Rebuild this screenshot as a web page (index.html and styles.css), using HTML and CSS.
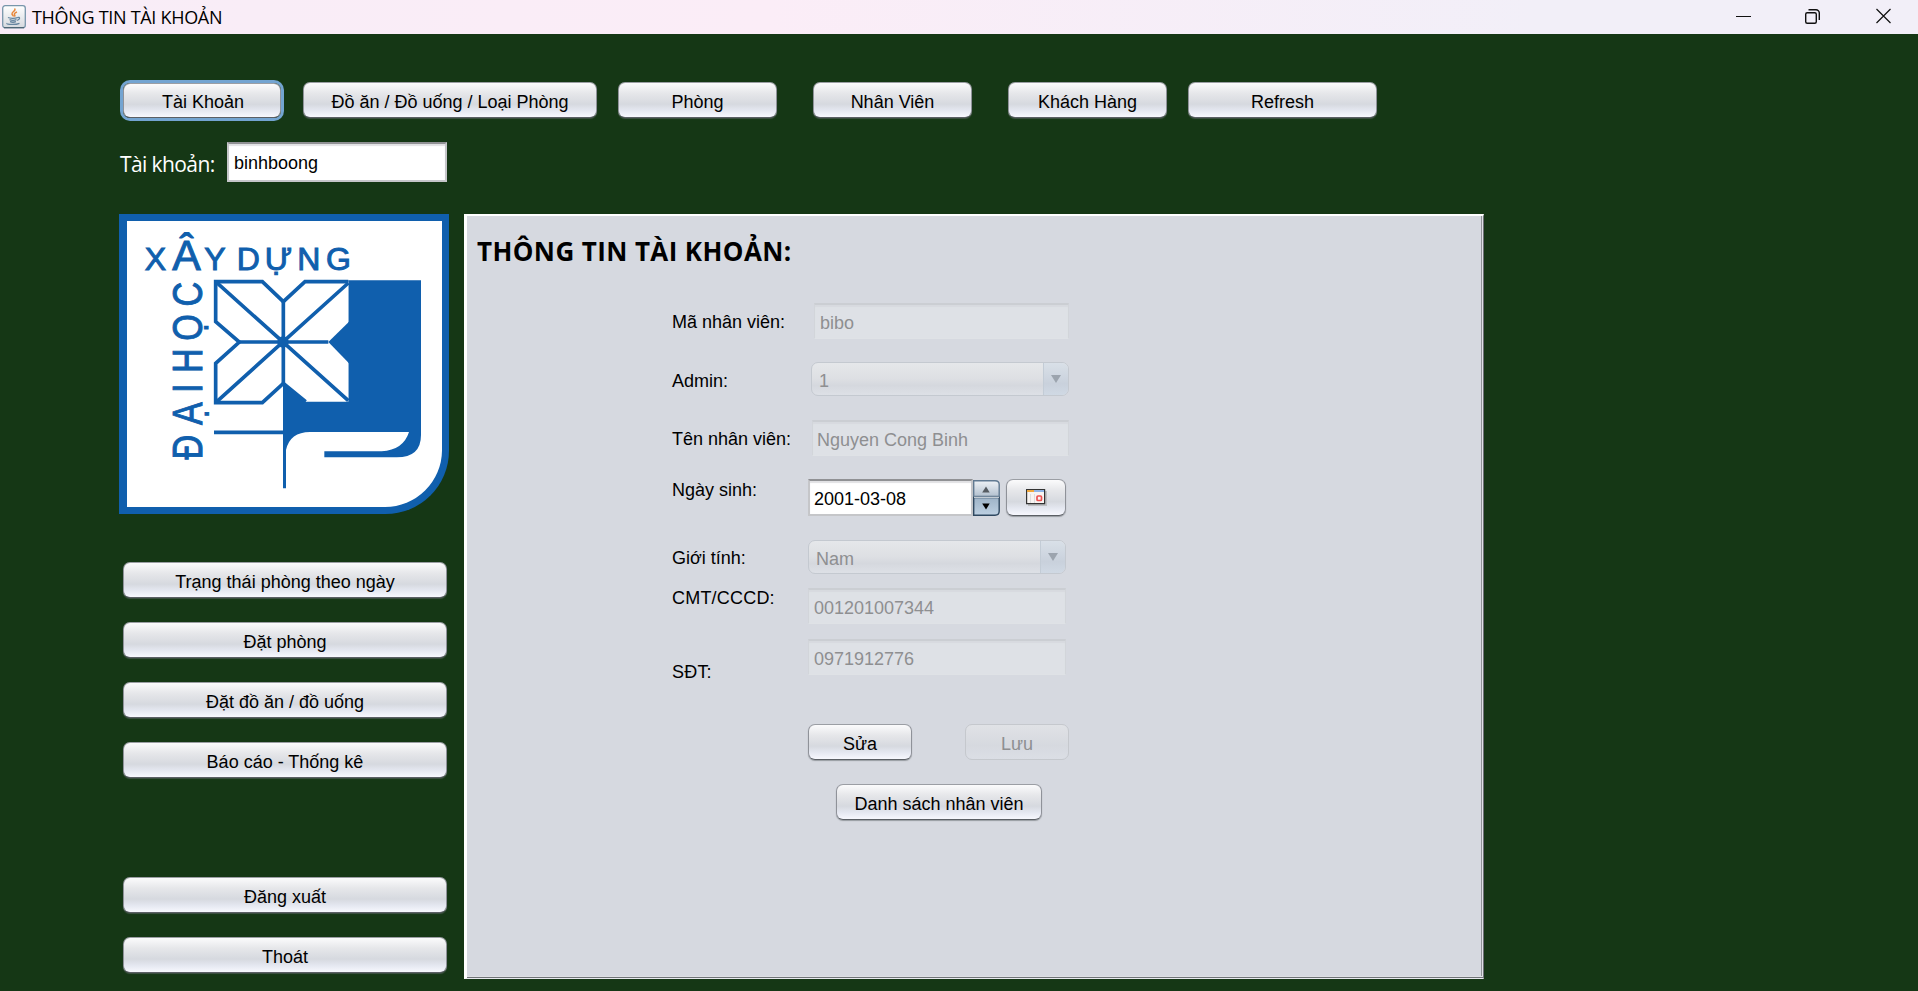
FILE: index.html
```html
<!DOCTYPE html>
<html lang="vi">
<head>
<meta charset="utf-8">
<title>THÔNG TIN TÀI KHOẢN</title>
<link rel="stylesheet" href="styles.css">
</head>
<body>
<header class="titlebar">
  <svg class="java-icon" width="24" height="24" viewBox="0 0 24 24">
    <defs><linearGradient id="jg" x2="0" y2="1"><stop offset="0" stop-color="#fff"/><stop offset="1" stop-color="#d5d9de"/></linearGradient></defs>
    <rect x=".7" y=".7" width="22.6" height="22" rx="2.5" fill="url(#jg)" stroke="#7896ab" stroke-width="1.3"/>
    <path d="M2 22.7h20" stroke="#49616f" stroke-width="1.2"/>
    <path d="M12.5 3.5c2 2-3 3.500-2.500 5.500.2 1 1.500 1.500 1.500 2.500M15 7c-2 .8-3 1.600-2.500 2.600.5.8.8 1.200 0 2" fill="none" stroke="#e8883c" stroke-width="1.500"/>
    <path d="M6 12.500c2 1 7 1 9.500.2M15.500 12.500c2.600-.8 3 1.500-.4 3M7.500 14.700c2 .8 5 .8 7 0M8 16.700c2 .7 4 .7 6 0M5 18.200c-1 1.500 9 1.700 12.500.1" fill="none" stroke="#66859f" stroke-width="1.300"/>
  </svg>
  <span class="title">THÔNG TIN TÀI KHOẢN</span>
  <svg class="win-controls" width="156" height="16" viewBox="0 0 156 16" fill="none" stroke="#111">
    <path d="M0 8.500h15"/>
    <rect x="69.700" y="4.700" width="10.600" height="10.600" rx="1.500" stroke-width="1.400"/>
    <path d="M72.500 1.700h7.500a3.300 3.300 0 0 1 3.300 3.300v7" stroke-width="1.400"/>
    <path d="M140.500 1l14 14M154.500 1l-14 14" stroke-width="1.200"/>
  </svg>
</header>

<main class="desktop">
  <nav class="nav">
    <button class="btn b-acc focused">Tài Khoản</button>
    <button class="btn b-food">Đồ ăn / Đồ uống / Loại Phòng</button>
    <button class="btn b-room">Phòng</button>
    <button class="btn b-staff">Nhân Viên</button>
    <button class="btn b-guest">Khách Hàng</button>
    <button class="btn b-refresh">Refresh</button>
  </nav>
  <div class="account">
    <label class="account-label">Tài khoản:</label>
    <div class="field active account-field">binhboong</div>
  </div>

  <div class="content">
    <aside class="sidebar">
      <svg class="logo" width="330" height="300" viewBox="27 27 990 900">
        <path d="M27 27H1017V737A190 190 0 0 1 827 927H27Z" fill="#105fad"/>
        <path d="M51 48H996V737A171 171 0 0 1 825 906H51Z" fill="#fff"/>
        <path d="M715 226H933V690Q933 757 860 757H643V739H815Q880 735 897 681H600Q540 681 528 735V850H519V530L588 590H715Z" fill="#105fad"/>
        <path d="M316 230H457L520 290 583 230H715V350L655 411 715 475V587H587L520 532 457 593H316V475L388 411 316 350Z" fill="#fff"/>
        <path d="M655 411L717 350V475Z" fill="#105fad"/>
        <g fill="none" stroke="#105fad" stroke-width="11">
          <path d="M715 230H585L520 290 457 230H317V350L388 411 317 475V593H457L520 535 587 590"/>
          <path d="M317 230L715 587M715 234L317 593M388 411H655M520 290V535M312 682H520"/>
        </g>
        <circle cx="519" cy="411" r="17" fill="#105fad"/>
        <g class="logo-text">
          <text y="194" font-size="96" x="104">X</text>
          <text y="194" font-size="128" x="187">Â</text>
          <text y="194" font-size="96" x="283 352 380 464 562 648">Y DỰNG</text>
          <text transform="translate(275 0) rotate(-90) scale(.8 1)" font-size="128" x="-954 -825 -705 -660 -630 -509 -381">ĐẠI HỌC</text>
        </g>
      </svg>
      <div class="menu">
        <button class="btn">Trạng thái phòng theo ngày</button>
        <button class="btn">Đặt phòng</button>
        <button class="btn">Đặt đồ ăn / đồ uống</button>
        <button class="btn">Báo cáo - Thống kê</button>
        <button class="btn logout">Đăng xuất</button>
        <button class="btn">Thoát</button>
      </div>
    </aside>

    <section class="panel">
      <h1 class="heading">THÔNG TIN TÀI KHOẢN:</h1>
      <div class="form">
        <label class="l-9">Mã nhân viên:</label>
        <div class="field f-id">bibo</div>

        <label class="l-9">Admin:</label>
        <div class="combo c-admin"><span>1</span><i class="arrow"></i></div>

        <label class="l-9">Tên nhân viên:</label>
        <div class="field f-name">Nguyen Cong Binh</div>

        <label class="l-1">Ngày sinh:</label>
        <div class="date">
          <div class="field active date-field">2001-03-08</div>
          <svg class="spinner" width="27" height="37" viewBox="0 0 27 37">
            <defs>
              <linearGradient id="up" x2="0" y2="1"><stop offset="0" stop-color="#eef2f6"/><stop offset="1" stop-color="#b2c0cf"/></linearGradient>
              <linearGradient id="dn" x2="0" y2="1"><stop offset="0" stop-color="#9eb3c7"/><stop offset="1" stop-color="#bdd0e2"/></linearGradient>
            </defs>
            <path d="M.7 1.700H22Q26.200 1.700 26.200 5.500V17.500H.7Z" fill="url(#up)" stroke="#607991" stroke-width="1.400"/>
            <path d="M.7 18.500H26.200V32Q26.200 36.200 22 36.200H.7Z" fill="url(#dn)" stroke="#2f4860" stroke-width="1.400"/>
            <path d="M1 18.300h25" stroke="#e8edf2"/>
            <path d="M9.200 13.500h7.500L13 7.500Z" fill="#555b61"/>
            <path d="M9.200 24.500h7.500l-3.700 6Z" fill="#000"/>
          </svg>
          <button class="btn cal" aria-label="Lịch">
            <svg width="22" height="18" viewBox="0 0 22 18">
              <path d="M2 2h19v15H2z" fill="#bdbfc2"/>
              <path d="M.6 .6h18v14H.6z" fill="#f8f4f2" stroke="#333" stroke-width="1.200"/>
              <path d="M1 1h7v2H1z" fill="#f0a83c"/><path d="M8 1h10v2H8z" fill="#8fb4e6"/>
              <path d="M4.500 5v9M8.500 5v9" stroke="#ddd"/>
              <rect x="11" y="7" width="4.500" height="4.500" rx="1" fill="none" stroke="#ec5050" stroke-width="1.700"/>
            </svg>
          </button>
        </div>

        <label class="l-8">Giới tính:</label>
        <div class="combo"><span>Nam</span><i class="arrow"></i></div>

        <label class="wide">CMT/CCCD:</label>
        <div class="field">001201007344</div>

        <label class="l-22 wide">SĐT:</label>
        <div class="field">0971912776</div>

        <div class="actions">
          <button class="btn edit">Sửa</button>
          <button class="btn disabled">Lưu</button>
        </div>
        <button class="btn list">Danh sách nhân viên</button>
      </div>
    </section>
  </div>
</main>
</body>
</html>
```

FILE: styles.css
```css
* { box-sizing: border-box; }
body {
  margin: 0;
  width: 1918px;
  height: 991px;
  overflow: hidden;
  background: #153715;
  font: 18px/20px "Liberation Sans", Arial, sans-serif;
  color: #000;
}
.titlebar {
  display: flex;
  height: 34px;
  padding: 5px 26px 0 2px;
  background: linear-gradient(90deg, #f8edf7 0%, #fbedf7 40%, #f2eff8 80%);
}
.title {
  margin-left: 6px;
  font: 18px/24px "Open Sans", sans-serif;
  letter-spacing: -0.3px;
  white-space: nowrap;
}
.win-controls { margin: 3px 0 0 auto; }

.desktop { padding: 46px 0 0 119px; }
.nav { display: flex; height: 40px; padding: 2px 0 0 4px; }
.btn {
  display: block;
  height: 36px;
  margin: 0;
  padding: 3px 0 0;
  border: 1.5px solid #8f9299;
  border-top-color: #9b9ea4;
  border-bottom-color: #5b5f65;
  border-radius: 7px;
  background: linear-gradient(#fbfbfc 0%, #e6e7ea 30%, #d6d9df 62%, #e4e7f0 80%, #f7f8fe 100%);
  box-shadow: 0 1px 1px rgba(100, 105, 110, .55);
  font: inherit;
  color: #000;
  text-align: center;
  white-space: nowrap;
}
.nav .focused {
  height: 35px;
  margin-top: 1px;
  padding: 2px 0 0 2px;
  box-shadow: 0 0 0 3px #73a4d1;
}
.b-acc { width: 158px; }
.b-food { width: 294px; margin-left: 22px; }
.b-room { width: 159px; margin-left: 21px; }
.b-staff { width: 159px; margin-left: 36px; }
.b-guest { width: 159px; margin-left: 36px; }
.b-refresh { width: 189px; margin-left: 21px; }

.account { display: flex; margin-top: 22px; height: 72px; }
.account-label {
  width: 108px;
  padding: 9px 0 0 1px;
  font: 21px/26px "Open Sans", sans-serif;
  letter-spacing: -0.6px;
  color: #fff;
  white-space: nowrap;
}
.field {
  width: 258px;
  height: 36px;
  padding: 8px 0 0 5px;
  border: 1px solid #d2d5da;
  border-top: 2px solid #cbced3;
  border-bottom-color: #dfe2e6;
  background: #dee1e6;
  box-shadow: inset 0 2px 1px #d7dadf;
  color: #8e8f91;
  white-space: nowrap;
}
.field.active {
  border: 2px solid #c5c6c9;
  border-top: 2px solid #909194;
  background: #fff;
  box-shadow: inset 0 2px 1px #e1e1e4;
  color: #000;
}
.field.account-field { width: 220px; height: 40px; padding: 9px 0 0 5px; }

.content { display: flex; }
.sidebar { width: 330px; margin-right: 15px; }
.logo { display: block; }
.logo-text { font-family: "Liberation Sans", Arial, sans-serif; fill: #105fad; stroke: #105fad; stroke-width: 3; }
.menu { display: grid; gap: 24px; padding: 48px 2px 0 4px; }
.menu .logout { margin-top: 75px; }

.panel {
  width: 1020px;
  height: 765px;
  border: 2px solid #fff;
  border-width: 2px 1px 1px 3px;
  border-color: #fff #6f7277 #e8eaee #fff;
  background: #d6d9e0;
  box-shadow: inset 0 -1px #6f7277, inset -1px -2px #dfe1e5, inset -2px -2px #8f9297;
}
.heading {
  margin: 18px 0 0 10px;
  font: bold 26px/34px "Open Sans", sans-serif;
  letter-spacing: 0.4px;
  white-space: nowrap;
}
.form {
  display: grid;
  grid-template-columns: 136px 262px;
  grid-template-rows: 59px 58px 59px 61px 48px 51px 85px 60px 37px;
  align-items: start;
  margin: 35px 0 0 205px;
}
.form label { white-space: nowrap; }
.form .wide { letter-spacing: 0.2px; }
.l-9 { padding-top: 9px; }
.l-1 { padding-top: 1px; }
.l-8 { padding-top: 8px; }
.l-22 { padding-top: 23px; }
.f-id { width: 255px; margin-left: 6px; }
.f-name { width: 257px; margin-left: 4px; padding-left: 4px; }
.combo {
  display: flex;
  justify-content: space-between;
  width: 258px;
  height: 34px;
  border: 1.5px solid #c4c9d0;
  border-radius: 7px;
  background: linear-gradient(#e5e7ea, #dddfe3 50%, #d5d8de 70%, #dde0e6);
  color: #8e8f91;
  overflow: hidden;
}
.combo span { padding: 8px 0 0 7px; }
.c-admin { margin-left: 3px; }
.arrow {
  width: 25px;
  border-left: 1px solid #c3ccd6;
  background: linear-gradient(#d9e0e8, #c9d1dc 65%, #d0d9e4);
}
.arrow::before {
  content: "";
  display: block;
  margin: 12px 0 0 7px;
  width: 0;
  border: 5px solid transparent;
  border-top: 8px solid #9ca4ae;
  border-bottom: 0;
}
.date { display: flex; }
.date-field { width: 165px; height: 37px; padding: 8px 0 0 4px; }
.cal { width: 60px; height: 37px; margin-left: 6px; padding: 1px 0 0 19px; }
.cal svg { display: block; }
.actions { grid-column: 2; display: flex; justify-content: space-between; padding-right: 1px; }
.actions .btn { width: 104px; }
.btn.disabled {
  border-color: #c5c8cd;
  background: linear-gradient(#e0e2e6, #d6d9df 60%, #dbdee5);
  box-shadow: none;
  color: #8e8f91;
}
.list { grid-column: 2; width: 206px; margin-left: 28px; }
```
